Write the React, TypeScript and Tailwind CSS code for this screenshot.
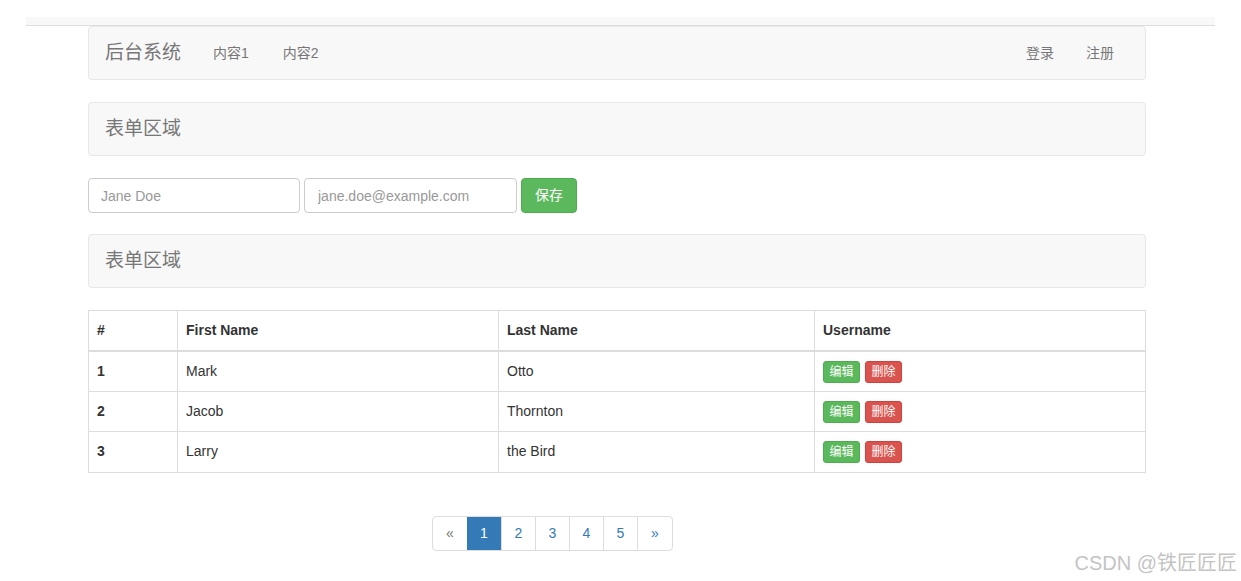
const FONT = "font-['Liberation_Sans','Noto_Sans_CJK_SC',sans-serif]"

const ROWS = [
  { id: 1, first: 'Mark', last: 'Otto' },
  { id: 2, first: 'Jacob', last: 'Thornton' },
  { id: 3, first: 'Larry', last: 'the Bird' },
]

function Bar({ title, children }: { title: string; children?: React.ReactNode }) {
  return (
    <div className="flex h-[54px] items-center rounded border border-[#e7e7e7] bg-[#f8f8f8] pl-[16px] pr-[31px]">
      <span className="text-[19px] text-[#777]">{title}</span>
      {children}
    </div>
  )
}

export default function App() {
  return (
    <div className={`${FONT} min-h-[581px] bg-white text-[14px] text-[#333]`}>
      <div className="ml-[26px] mt-[17px] h-[9px] w-[1189px] border-b border-[#ddd] bg-[#f8f8f8]" />

      <div className="mx-[88px] w-[1058px]">
        <Bar title="后台系统">
          <a className="ml-[32px] text-[#777]">内容1</a>
          <a className="ml-[34px] text-[#777]">内容2</a>
          <div className="ml-auto flex gap-[32px]">
            <a className="text-[#777]">登录</a>
            <a className="text-[#777]">注册</a>
          </div>
        </Bar>

        <div className="mt-[22px]">
          <Bar title="表单区域" />
        </div>

        <div className="mt-[22px] flex gap-[4px]">
          <input
            className="h-[35px] w-[212px] rounded border border-[#ccc] px-[12px] text-[14px] placeholder:text-[#999]"
            placeholder="Jane Doe"
          />
          <input
            className="h-[35px] w-[213px] rounded border border-[#ccc] px-[13px] text-[14px] placeholder:text-[#999]"
            placeholder="jane.doe@example.com"
          />
          <button className="h-[35px] w-[56px] rounded border border-[#4cae4c] bg-[#5cb85c] text-[14px] text-white">
            保存
          </button>
        </div>

        <div className="mt-[21px]">
          <Bar title="表单区域" />
        </div>

        <table className="mt-[22px] w-[1058px] table-fixed border-collapse border border-[#ddd]">
          <colgroup>
            <col className="w-[89px]" />
            <col className="w-[321px]" />
            <col className="w-[316px]" />
            <col />
          </colgroup>
          <thead>
            <tr className="h-[40px] border-b-2 border-[#ddd] text-left">
              <th className="border border-[#ddd] px-[8px] font-bold">#</th>
              <th className="border border-[#ddd] px-[8px] font-bold">First Name</th>
              <th className="border border-[#ddd] px-[8px] font-bold">Last Name</th>
              <th className="border border-[#ddd] px-[8px] font-bold">Username</th>
            </tr>
          </thead>
          <tbody>
            {ROWS.map((r) => (
              <tr key={r.id} className="h-[40.5px]">
                <td className="border border-[#ddd] px-[8px] font-bold">{r.id}</td>
                <td className="border border-[#ddd] px-[8px]">{r.first}</td>
                <td className="border border-[#ddd] px-[8px]">{r.last}</td>
                <td className="border border-[#ddd] px-[8px]">
                  <div className="flex gap-[5px] pt-[1px]">
                    <button className="h-[22px] w-[37px] rounded-[3px] border border-[#4cae4c] bg-[#5cb85c] text-[12px] text-white">
                      编辑
                    </button>
                    <button className="h-[22px] w-[37px] rounded-[3px] border border-[#d43f3a] bg-[#d9534f] text-[12px] text-white">
                      删除
                    </button>
                  </div>
                </td>
              </tr>
            ))}
          </tbody>
        </table>

        <div className="mt-[43px] flex pl-[344px]">
          <div className="flex h-[35px] overflow-hidden rounded border border-[#ddd]">
            <span className="flex w-[34px] items-center justify-center text-[#777]">«</span>
            <span className="flex w-[34px] items-center justify-center bg-[#337ab7] text-white">1</span>
            {[2, 3, 4, 5].map((n) => (
              <span key={n} className="flex w-[34px] items-center justify-center border-l border-[#ddd] text-[#337ab7]">
                {n}
              </span>
            ))}
            <span className="flex w-[35px] items-center justify-center border-l border-[#ddd] text-[#337ab7]">»</span>
          </div>
        </div>
      </div>

      <div className="absolute right-[4px] top-[548px] text-[20px] font-normal text-[#c4c4c4]">
        CSDN @铁匠匠匠
      </div>
    </div>
  )
}
